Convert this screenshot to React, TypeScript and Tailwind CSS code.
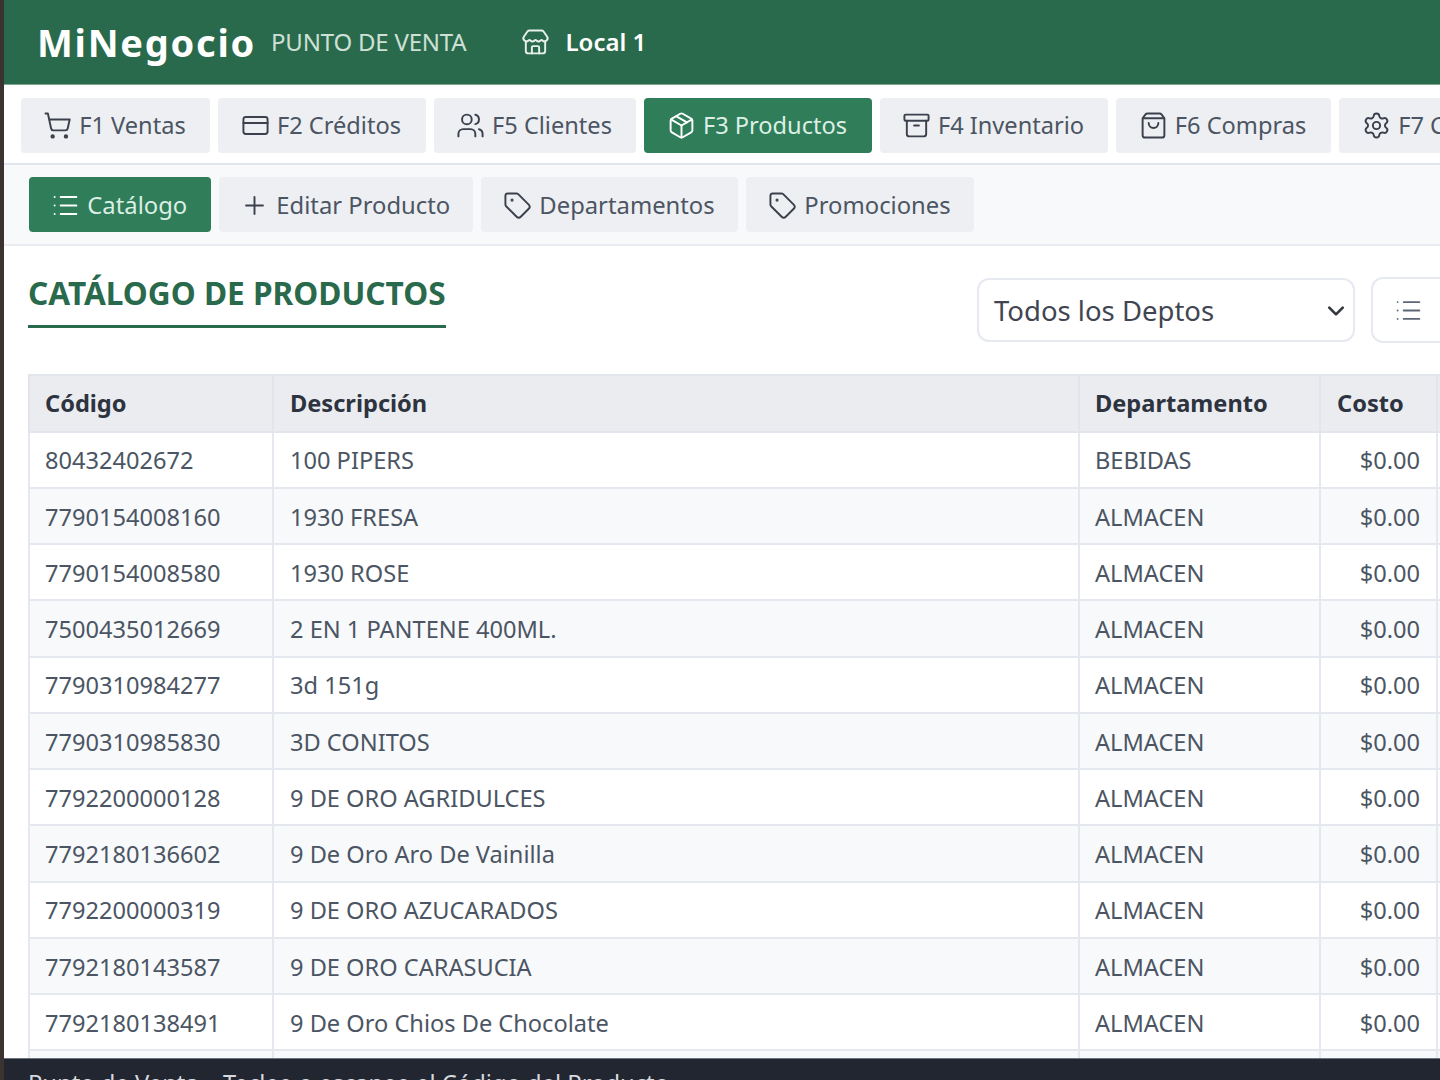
import {
  Archive,
  CreditCard,
  List,
  Package,
  Plus,
  Settings,
  ShoppingBag,
  ShoppingCart,
  Store,
  Tag,
  Users,
} from "lucide-react";
import type { ReactNode } from "react";

const ic = "size-[29px]";
const sw = 1.6;

const mainTabs: { label: string; icon: ReactNode; active?: boolean; w: string }[] = [
  { label: "F1 Ventas", icon: <ShoppingCart className={ic} strokeWidth={sw} />, w: "w-[189px]" },
  { label: "F2 Créditos", icon: <CreditCard className={ic} strokeWidth={sw} />, w: "w-[208px]" },
  { label: "F5 Clientes", icon: <Users className={ic} strokeWidth={sw} />, w: "w-[202px]" },
  { label: "F3 Productos", icon: <Package className={ic} strokeWidth={sw} />, active: true, w: "w-[228px]" },
  { label: "F4 Inventario", icon: <Archive className={ic} strokeWidth={sw} />, w: "w-[228px]" },
  { label: "F6 Compras", icon: <ShoppingBag className={ic} strokeWidth={sw} />, w: "w-[215px]" },
  { label: "F7 Configuración", icon: <Settings className={ic} strokeWidth={sw} />, w: "w-[272px]" },
];

const subTabs: { label: string; icon: ReactNode; active?: boolean; w: string }[] = [
  { label: "Catálogo", icon: <List className={ic} strokeWidth={sw} />, active: true, w: "w-[181.5px]" },
  { label: "Editar Producto", icon: <Plus className={ic} strokeWidth={sw} />, w: "w-[254.5px]" },
  { label: "Departamentos", icon: <Tag className={ic} strokeWidth={sw} />, w: "w-[257px]" },
  { label: "Promociones", icon: <Tag className={ic} strokeWidth={sw} />, w: "w-[228px]" },
];

const rows = [
  ["80432402672", "100 PIPERS", "BEBIDAS"],
  ["7790154008160", "1930 FRESA", "ALMACEN"],
  ["7790154008580", "1930 ROSE", "ALMACEN"],
  ["7500435012669", "2 EN 1 PANTENE 400ML.", "ALMACEN"],
  ["7790310984277", "3d 151g", "ALMACEN"],
  ["7790310985830", "3D CONITOS", "ALMACEN"],
  ["7792200000128", "9 DE ORO AGRIDULCES", "ALMACEN"],
  ["7792180136602", "9 De Oro Aro De Vainilla", "ALMACEN"],
  ["7792200000319", "9 DE ORO AZUCARADOS", "ALMACEN"],
  ["7792180143587", "9 DE ORO CARASUCIA", "ALMACEN"],
  ["7792180138491", "9 De Oro Chios De Chocolate", "ALMACEN"],
  ["", "", ""],
];

function TabButton({ label, icon, active, w, sub }: { label: string; icon: ReactNode; active?: boolean; w: string; sub?: boolean }) {
  return (
    <button
      className={`${w} h-[55px] shrink-0 rounded flex items-center justify-center gap-[7px] ${
        sub ? "pt-[2px] text-[23.8px] pr-px" : "pr-[2px] text-[23.6px]"
      } ${active ? "bg-[#2f7d59] text-[#dcefe5]" : "bg-[#eeeff2] text-[#4b5563]"}`}
    >
      <span className={active ? "text-white" : "text-[#3b414c]"}>{icon}</span>
      <span className="whitespace-nowrap">{label}</span>
    </button>
  );
}

export default function App() {
  return (
    <div className="w-[1440px] h-[1080px] overflow-hidden flex bg-[#3a3330] font-['Noto_Sans',sans-serif]">
      <div className="w-[4px] shrink-0" />
      <div className="flex-1 min-w-0 flex flex-col bg-white">
        <header className="h-[85px] shrink-0 bg-[#2a6a4c] flex items-center pl-[33px] border-b border-[#7fa893]">
          <span className="text-[38px] font-bold tracking-[1.75px] text-white">MiNegocio</span>
          <span className="ml-[15px] text-[24px] text-[#cfe0d7] tracking-[-0.2px]">PUNTO DE VENTA</span>
          <Store className="ml-[55px] size-[29px] text-[#e8f0ec]" strokeWidth={sw} />
          <span className="ml-[15px] text-[24px] font-semibold text-white">Local 1</span>
        </header>

        <nav className="h-[80px] shrink-0 flex items-center gap-[8px] pl-[17px] pt-[3px] border-b-2 border-[#e2e6ee] overflow-hidden">
          {mainTabs.map((t) => (
            <TabButton key={t.label} {...t} />
          ))}
        </nav>

        <nav className="h-[81px] shrink-0 flex items-center gap-[8px] pl-[25px] bg-[#f8f9fb] border-b-2 border-[#e9ebf1]">
          {subTabs.map((t) => (
            <TabButton key={t.label} {...t} sub />
          ))}
        </nav>

        <main className="flex-1 min-h-0 overflow-hidden pl-[25px] pt-[32px]">
          <div className="flex items-start justify-between w-[1462px] h-[96px]">
            <h2 className="-ml-px text-[31.6px] leading-[30px] font-bold text-[#2a6a4c] border-b-[3px] border-[#2a6a4c] pb-[17px]">
              CATÁLOGO DE PRODUCTOS
            </h2>
            <div className="flex gap-[16px] items-start">
              <div className="w-[378px] h-[64px] rounded-[12px] border-2 border-[#e6e9f0] flex items-center justify-between pl-[15px] pr-[8px] pt-px text-[27.5px] text-[#3f4652]">
                <span>Todos los Deptos</span>
                <svg viewBox="0 0 16 16" className="size-[18px]" fill="none" stroke="#343a40" strokeWidth={2.4} strokeLinecap="round" strokeLinejoin="round">
                  <path d="m2 5 6 6 6-6" />
                </svg>
              </div>
              <div className="w-[120px] h-[66px] -mt-px rounded-[12px] border-2 border-[#e6e9f0] flex items-center pl-[21px] text-[#5a6577]">
                <List className={ic} strokeWidth={1.5} />
              </div>
            </div>
          </div>

          <table className="table-fixed w-[1600px] -ml-px border-collapse text-[23.6px] text-[#4b5563]">
            <colgroup>
              <col className="w-[244px]" />
              <col className="w-[806px]" />
              <col className="w-[241px]" />
              <col className="w-[117px]" />
              <col className="w-[192px]" />
            </colgroup>
            <thead>
              <tr className="h-[56.5px] bg-[#eaecf0] text-[#2d333f] text-left">
                <th className="border-2 border-[#e2e5ec] px-[15px] font-bold">Código</th>
                <th className="border-2 border-[#e2e5ec] px-[16px] font-bold">Descripción</th>
                <th className="border-2 border-[#e2e5ec] px-[15px] font-bold">Departamento</th>
                <th className="border-2 border-[#e2e5ec] px-[16px] font-bold">Costo</th>
                <th className="border-2 border-[#e2e5ec]" />
              </tr>
            </thead>
            <tbody>
              {rows.map((r, i) => (
                <tr key={i} className={`h-[56.25px] ${i % 2 === 1 ? "bg-[#f8f9fb]" : "bg-white"}`}>
                  <td className="border-2 border-[#e6e8ef] px-[15px] pt-[3px] whitespace-nowrap">{r[0]}</td>
                  <td className="border-2 border-[#e6e8ef] px-[16px] pt-[3px] whitespace-nowrap">{r[1]}</td>
                  <td className="border-2 border-[#e6e8ef] px-[15px] pt-[3px] whitespace-nowrap">{r[2]}</td>
                  <td className="border-2 border-[#e6e8ef] px-[16px] pt-[3px] text-right whitespace-nowrap">{r[0] ? "$0.00" : ""}</td>
                  <td className="border-2 border-[#e6e8ef]" />
                </tr>
              ))}
            </tbody>
          </table>
        </main>

        <footer className="h-[22px] shrink-0 overflow-hidden bg-[#212631] border-t border-[#6b7280] pl-[24px] pt-[8px] text-[23.75px] leading-[32px] text-[#d5d8de] whitespace-nowrap">
          Punto de Venta – Teclee o escanee el Código del Producto
        </footer>
      </div>
    </div>
  );
}
